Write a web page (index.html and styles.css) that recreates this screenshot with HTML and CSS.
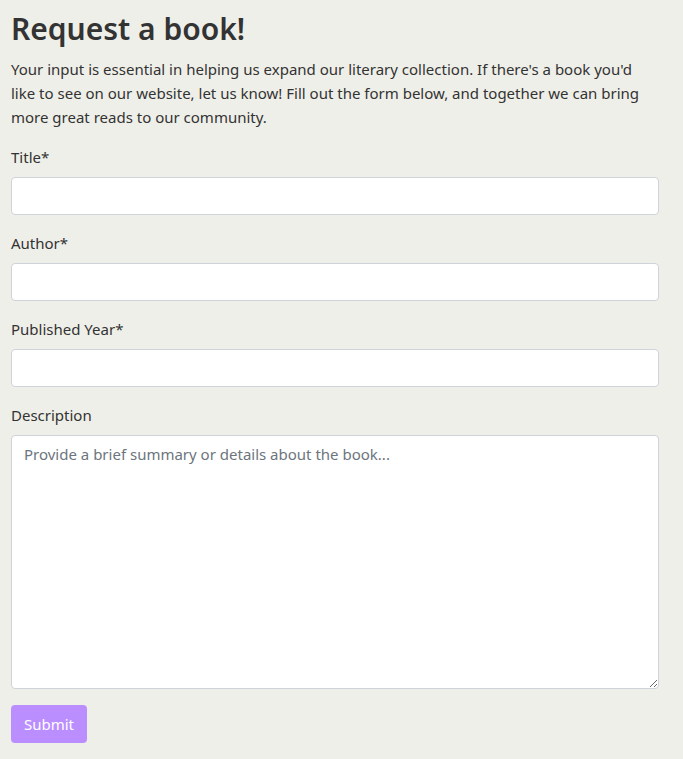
FILE: index.html
```html
<!DOCTYPE html>
<html lang="en">
<head>
<meta charset="utf-8">
<title>Request a book</title>
<link rel="stylesheet" href="styles.css">
</head>
<body>
<main class="page">
  <h1 class="title">Request a book!</h1>
  <p class="intro">Your input is essential in helping us expand our literary collection. If there's a book you'd like to see on our website, let us know! Fill out the form below, and together we can bring more great reads to our community.</p>
  <form class="form">
    <div class="field">
      <label class="label" for="title">Title*</label>
      <input class="control" id="title" type="text">
    </div>
    <div class="field">
      <label class="label" for="author">Author*</label>
      <input class="control" id="author" type="text">
    </div>
    <div class="field">
      <label class="label" for="year">Published Year*</label>
      <input class="control" id="year" type="text">
    </div>
    <div class="field">
      <label class="label" for="desc">Description</label>
      <textarea class="control area" id="desc" placeholder="Provide a brief summary or details about the book..."></textarea>
    </div>
    <div class="actions">
      <button class="submit" type="button">Submit</button>
    </div>
  </form>
</main>
</body>
</html>
```
FILE: styles.css
```css
html, body {
  margin: 0;
  padding: 0;
  background: #efefe9;
}
body {
  font-family: "Noto Sans", "Open Sans", sans-serif;
  color: #333333;
  font-size: 15px;
  line-height: 24px;
}
.page {
  width: 648px;
  padding: 10px 0 0 11px;
}
.title {
  margin: 0 0 9px 0;
  font-size: 30px;
  line-height: 38px;
  font-weight: 600;
  color: #333333;
}
.intro {
  margin: 0 0 16px 0;
}
.form {
  display: flex;
  flex-direction: column;
  gap: 16px;
}
.field {
  display: flex;
  flex-direction: column;
  gap: 8px;
}
.label {
  display: block;
  line-height: 24px;
}
.control {
  box-sizing: border-box;
  width: 100%;
  height: 38px;
  margin: 0;
  border: 1px solid #ced4da;
  border-radius: 4px;
  background: #ffffff;
  font: inherit;
  color: #333333;
  padding: 6px 12px;
}
.area {
  height: 254px;
  resize: vertical;
  display: block;
  padding: 6px 12px;
}
.area::placeholder {
  color: #6c757d;
  opacity: 1;
}
.actions {
  display: flex;
}
.submit {
  height: 38px;
  width: 76px;
  border: none;
  border-radius: 4px;
  background: #bb8eff;
  color: #ffffff;
  font: inherit;
  padding: 0;
}
```
